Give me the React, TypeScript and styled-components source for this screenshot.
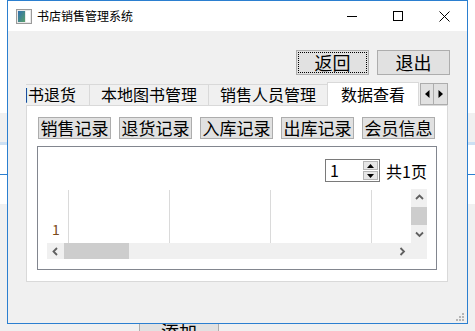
import styled, { createGlobalStyle } from "styled-components";

const GlobalStyle = createGlobalStyle`
	html, body {
		margin: 0;
		padding: 0;
	}
	body {
		font-family: "Noto Sans CJK SC", "Noto Sans", sans-serif;
		color: #000;
		background: #fff;
	}
`;

const tabs = [
	{ label: "图书退货", active: false },
	{ label: "本地图书管理", active: false },
	{ label: "销售人员管理", active: false },
	{ label: "数据查看", active: true },
];
const records = ["销售记录", "退货记录", "入库记录", "出库记录", "会员信息"];
const columns = [0, 1, 2, 3];

function Chevron({ dir }: { dir: "up" | "down" | "left" | "right" }) {
	const paths = {
		up: "M1 5 L4.5 1.5 L8 5",
		down: "M1 1.5 L4.5 5 L8 1.5",
		left: "M5 1 L1.5 4.5 L5 8",
		right: "M1.5 1 L5 4.5 L1.5 8",
	};
	const vertical = dir === "up" || dir === "down";
	return (
		<svg width={vertical ? 9 : 7} height={vertical ? 7 : 9} viewBox={vertical ? "0 0 9 7" : "0 0 7 9"}>
			<path d={paths[dir]} fill="none" stroke="#606060" strokeWidth="1.8" />
		</svg>
	);
}

export default function App() {
	return (
		<>
			<GlobalStyle />
			<Desktop>
				<Band $height={113} $bg="#ffffff" />
				<Band $height={29} $bg="#f0f0f0" />
				<Band $height={3} $bg="#cde0f3" />
				<Band $height={29} $bg="#ffffff" />
				<Band $height={1} $bg="#2b7fd0" />
				<Band $height={29} $bg="#ffffff" />
				<Band $height={127} $bg="#f0f0f0">
					<AddButton>添加</AddButton>
				</Band>

				<Window>
					<TitleBar>
						<svg width="16" height="15" viewBox="0 0 16 15">
							<defs>
								<linearGradient id="ico" x1="0" y1="0" x2="1" y2="1">
									<stop offset="0" stopColor="#2f6fb0" />
									<stop offset="1" stopColor="#58a06a" />
								</linearGradient>
							</defs>
							<rect x="0.5" y="0.5" width="15" height="14" fill="#e9e9e9" stroke="#9a9a9a" />
							<rect x="2" y="2" width="7" height="11" fill="url(#ico)" />
							<rect x="10" y="2" width="4" height="11" fill="#ffffff" />
						</svg>
						<Title>书店销售管理系统</Title>
						<Controls>
							<Control>
								<svg width="10" height="10" viewBox="0 0 10 10">
									<path d="M0 5.5 H10" stroke="#000" strokeWidth="1" />
								</svg>
							</Control>
							<Control>
								<svg width="10" height="10" viewBox="0 0 10 10">
									<rect x="0.5" y="0.5" width="9" height="9" fill="none" stroke="#000" strokeWidth="1" />
								</svg>
							</Control>
							<Control>
								<svg width="11" height="11" viewBox="0 0 11 11">
									<path d="M0.5 0.5 L10.5 10.5 M10.5 0.5 L0.5 10.5" stroke="#000" strokeWidth="1" />
								</svg>
							</Control>
						</Controls>
					</TitleBar>

					<Body>
						<TopBar>
							<PushButton $focused>返回</PushButton>
							<PushButton>退出</PushButton>
						</TopBar>

						<TabControl>
							<TabStrip>
								<TabViewport>
									<TabRow $offset={26}>
										{tabs.map((t) => (
											<Tab key={t.label} $active={t.active}>{t.label}</Tab>
										))}
									</TabRow>
								</TabViewport>
								<ScrollPair>
									<ScrollArrow>
										<svg width="5" height="8" viewBox="0 0 5 8"><path d="M4.5 0 V8 L0 4 Z" fill="#000" /></svg>
									</ScrollArrow>
									<ScrollArrow>
										<svg width="5" height="8" viewBox="0 0 5 8"><path d="M0.5 0 V8 L5 4 Z" fill="#000" /></svg>
									</ScrollArrow>
								</ScrollPair>
							</TabStrip>

							<Pane>
								<RecordRow>
									{records.map((r) => (
										<RecordButton key={r}>{r}</RecordButton>
									))}
								</RecordRow>

								<GroupPanel>
									<PagerRow>
										<SpinBox>
											<SpinValue>1</SpinValue>
											<SpinButtons>
												<SpinButton>
													<svg width="7" height="4" viewBox="0 0 7 4"><path d="M0 4 L3.5 0 L7 4 Z" fill="#000" /></svg>
												</SpinButton>
												<SpinButton>
													<svg width="7" height="4" viewBox="0 0 7 4"><path d="M0 0 L3.5 4 L7 0 Z" fill="#000" /></svg>
												</SpinButton>
											</SpinButtons>
										</SpinBox>
										<PageTotal>共1页</PageTotal>
									</PagerRow>

									<Grid>
										<GridArea>
											<RowHeader>
												<HeaderCell />
												<RowNumber>1</RowNumber>
											</RowHeader>
											{columns.map((c) => (
												<DataColumn key={c}>
													<HeaderCell />
												</DataColumn>
											))}
										</GridArea>
										<VScroll>
											<ArrowCell $h={17}><Chevron dir="up" /></ArrowCell>
											<VThumb />
											<Spacer />
											<ArrowCell $h={17}><Chevron dir="down" /></ArrowCell>
										</VScroll>
										<HScroll>
											<ArrowCell $w={17}><Chevron dir="left" /></ArrowCell>
											<HThumb />
											<Spacer />
											<ArrowCell $w={17}><Chevron dir="right" /></ArrowCell>
										</HScroll>
										<Corner />
									</Grid>
								</GroupPanel>
							</Pane>
						</TabControl>
					</Body>

					<Grip width="9" height="9" viewBox="0 0 9 9">
						<rect x="6" y="0" width="2" height="2" fill="#b5b5b5" />
						<rect x="3" y="3" width="2" height="2" fill="#b5b5b5" />
						<rect x="6" y="3" width="2" height="2" fill="#b5b5b5" />
						<rect x="0" y="6" width="2" height="2" fill="#b5b5b5" />
						<rect x="3" y="6" width="2" height="2" fill="#b5b5b5" />
						<rect x="6" y="6" width="2" height="2" fill="#b5b5b5" />
					</Grip>
				</Window>
			</Desktop>
		</>
	);
}

const Desktop = styled.div`
	position: relative;
	width: 475px;
	height: 331px;
	overflow: hidden;
	display: flex;
	flex-direction: column;
`;

const Band = styled.div<{ $height: number; $bg: string }>`
	flex-shrink: 0;
	height: ${(p) => p.$height}px;
	background: ${(p) => p.$bg};
`;

const AddButton = styled.div`
	box-sizing: border-box;
	width: 80px;
	height: 26px;
	margin: 114px 0 0 139px;
	border: 1px solid #adadad;
	background: #e1e1e1;
	font-size: 18px;
	line-height: 24px;
	text-align: center;
`;

const Window = styled.div`
	position: absolute;
	left: 7px;
	top: 0;
	width: 461px;
	height: 324px;
	box-sizing: border-box;
	border: 1px solid #2b7fd0;
	background: #f0f0f0;
	display: flex;
	flex-direction: column;
`;

const TitleBar = styled.div`
	flex-shrink: 0;
	height: 30px;
	background: #fff;
	display: flex;
	align-items: center;
	padding-left: 8px;

	> svg {
		margin-right: 5px;
	}
`;

const Title = styled.span`
	font-size: 12px;
	line-height: 1;
	color: #000;
`;

const Controls = styled.div`
	margin-left: auto;
	display: flex;
	height: 30px;
`;

const Control = styled.div`
	width: 46px;
	height: 30px;
	display: flex;
	align-items: center;
	justify-content: center;
`;

const Body = styled.div`
	flex: 1;
	display: flex;
	flex-direction: column;
	padding: 19px 19px 0 18px;
`;

const TopBar = styled.div`
	display: flex;
	justify-content: flex-end;
	gap: 8px;
	margin-right: -2px;
`;

const PushButton = styled.div<{ $focused?: boolean }>`
	box-sizing: border-box;
	width: 73px;
	height: 25px;
	border: 1px solid #adadad;
	background: #e1e1e1;
	font-size: 18px;
	line-height: 23px;
	text-align: center;
	outline: ${(p) => (p.$focused ? "1px dotted #000" : "none")};
	outline-offset: -3px;
`;

const TabControl = styled.div`
	margin-top: 7px;
	display: flex;
	flex-direction: column;
`;

const TabStrip = styled.div`
	display: flex;
	height: 23px;
`;

const TabViewport = styled.div`
	flex: 1;
	height: 24px;
	margin-bottom: -1px;
	overflow: hidden;
`;

const TabRow = styled.div<{ $offset: number }>`
	display: flex;
	align-items: flex-start;
	margin-left: -${(p) => p.$offset}px;
`;

const Tab = styled.div<{ $active: boolean }>`
	flex-shrink: 0;
	box-sizing: border-box;
	position: relative;
	margin-top: ${(p) => (p.$active ? 0 : 2)}px;
	margin-left: -1px;
	height: ${(p) => (p.$active ? 24 : 21)}px;
	padding: 0 ${(p) => (p.$active ? 13 : 11)}px;
	border: 1px solid #d9d9d9;
	border-bottom: none;
	background: ${(p) => (p.$active ? "#fff" : "#f0f0f0")};
	font-size: 16px;
	line-height: ${(p) => (p.$active ? 23 : 19)}px;
	white-space: nowrap;
	z-index: ${(p) => (p.$active ? 2 : 1)};

	&:first-child {
		margin-left: 0;
		padding-right: 13px;
	}
`;

const ScrollPair = styled.div`
	display: flex;
	margin-top: 1px;
	height: 22px;
`;

const ScrollArrow = styled.div`
	box-sizing: border-box;
	width: 14px;
	height: 22px;
	border: 1px solid #adadad;
	background: #e1e1e1;
	display: flex;
	align-items: center;
	justify-content: center;

	& + & {
		border-left: none;
	}
`;

const Pane = styled.div`
	box-sizing: border-box;
	height: 177px;
	border: 1px solid #d9d9d9;
	background: #fff;
	padding: 11px 0 0 11px;
	display: flex;
	flex-direction: column;
`;

const RecordRow = styled.div`
	display: flex;
	gap: 8px;
`;

const RecordButton = styled.div`
	box-sizing: border-box;
	width: 73px;
	height: 22px;
	border: 1px solid #adadad;
	background: #e1e1e1;
	font-size: 17px;
	line-height: 20px;
	text-align: center;
	white-space: nowrap;
`;

const GroupPanel = styled.div`
	box-sizing: border-box;
	width: 400px;
	height: 124px;
	margin: 7px 0 0 -1px;
	border: 1px solid #82868f;
	padding: 12px 9px 9px 9px;
	display: flex;
	flex-direction: column;
	gap: 7px;
`;

const PagerRow = styled.div`
	display: flex;
	justify-content: flex-end;
	align-items: center;
	gap: 6px;
`;

const SpinBox = styled.div`
	box-sizing: border-box;
	width: 55px;
	height: 23px;
	border: 1px solid #7a7a7a;
	background: #fff;
	display: flex;
`;

const SpinValue = styled.div`
	flex: 1;
	padding-left: 4px;
	font-size: 16px;
	line-height: 21px;
`;

const SpinButtons = styled.div`
	width: 15px;
	display: flex;
	flex-direction: column;
	padding: 1px 1px 1px 0;
	gap: 1px;
`;

const SpinButton = styled.div`
	flex: 1;
	box-sizing: border-box;
	border: 1px solid #b5b5b5;
	background: #e6e6e6;
	display: flex;
	align-items: center;
	justify-content: center;
`;

const PageTotal = styled.span`
	font-size: 16px;
	line-height: 20px;
`;

const Grid = styled.div`
	height: 70px;
	display: grid;
	grid-template-columns: 1fr 16px;
	grid-template-rows: 1fr 16px;
	background: #f0f0f0;
`;

const GridArea = styled.div`
	background: #fff;
	display: flex;
	overflow: hidden;
`;

const RowHeader = styled.div`
	flex-shrink: 0;
	width: 21px;
	display: flex;
	flex-direction: column;
`;

const HeaderCell = styled.div`
	height: 26px;
`;

const RowNumber = styled.div`
	height: 28px;
	padding-left: 5px;
	font-size: 14px;
	line-height: 28px;
	color: #7a4a1a;
`;

const DataColumn = styled.div`
	flex-shrink: 0;
	width: 100px;
	margin-top: 1px;
	border-left: 1px solid #dadada;
`;

const VScroll = styled.div`
	display: flex;
	flex-direction: column;
`;

const HScroll = styled.div`
	display: flex;
`;

const ArrowCell = styled.div<{ $w?: number; $h?: number }>`
	flex-shrink: 0;
	width: ${(p) => (p.$w ? `${p.$w}px` : "auto")};
	height: ${(p) => (p.$h ? `${p.$h}px` : "auto")};
	display: flex;
	align-items: center;
	justify-content: center;
`;

const VThumb = styled.div`
	height: 18px;
	margin-top: 1px;
	background: #cdcdcd;
`;

const HThumb = styled.div`
	width: 65px;
	background: #cdcdcd;
`;

const Spacer = styled.div`
	flex: 1;
`;

const Corner = styled.div`
	background: #f0f0f0;
`;

const Grip = styled.svg`
	position: absolute;
	right: 2px;
	bottom: 1px;
`;
